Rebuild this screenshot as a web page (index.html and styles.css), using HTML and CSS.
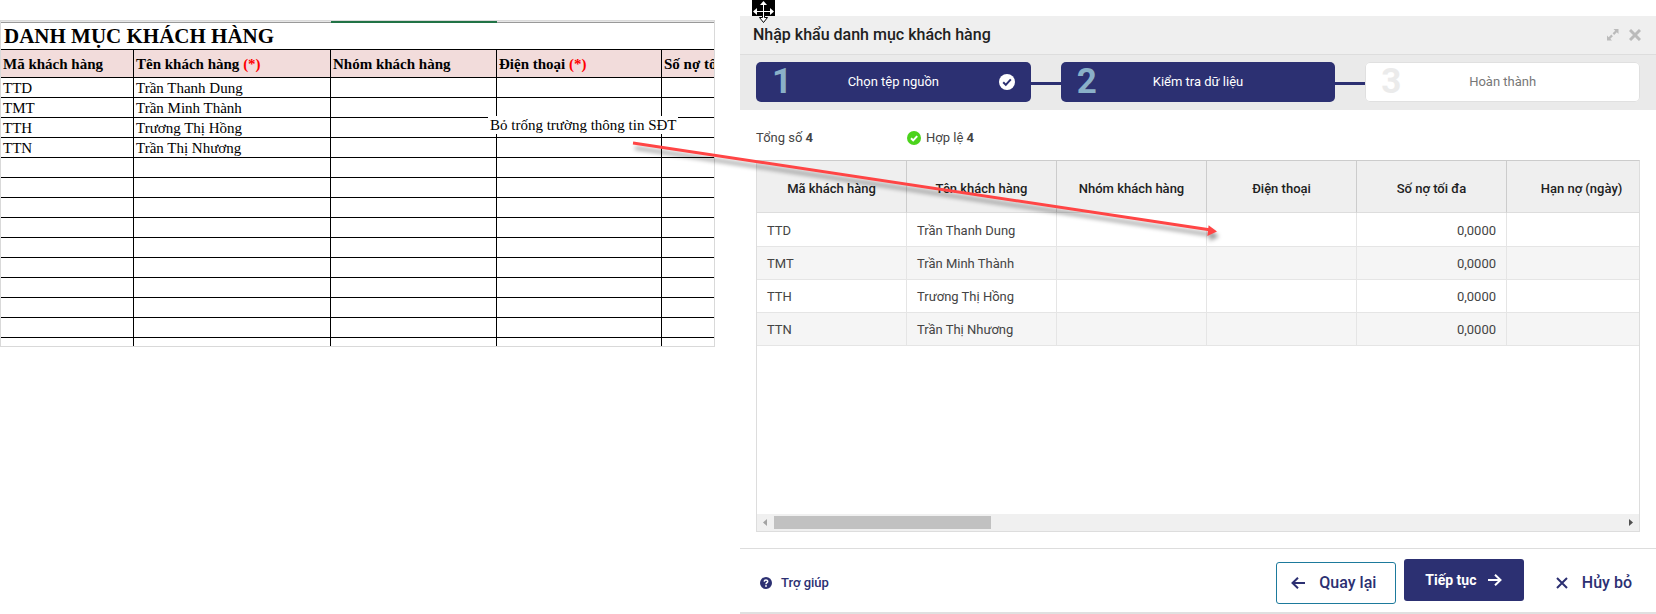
FILE: index.html
```html
<!DOCTYPE html>
<html lang="vi">
<head>
    <meta charset="UTF-8">
    <meta name="viewport" content="width=device-width, initial-scale=1.0">
    <title>Nhập khẩu danh mục khách hàng</title>
    <link rel="stylesheet" href="styles.css">
</head>
<body>
    <section class="sheet">
        <div class="sheet-top"><span></span><span></span><span class="selected"></span><span></span><span></span></div>
        <h2>DANH MỤC KHÁCH HÀNG</h2>
        <table class="sheet-table">
            <colgroup>
                <col class="col-code"><col class="col-name"><col class="col-group"><col class="col-phone"><col>
            </colgroup>
            <thead>
                <tr>
                    <th>Mã khách hàng</th>
                    <th>Tên khách hàng <em>(*)</em></th>
                    <th>Nhóm khách hàng</th>
                    <th>Điện thoại <em>(*)</em></th>
                    <th>Số nợ tối đa</th>
                </tr>
            </thead>
            <tbody>
                <tr><td>TTD</td><td>Trần Thanh Dung</td><td></td><td></td><td></td></tr>
                <tr><td>TMT</td><td>Trần Minh Thành</td><td></td><td></td><td></td></tr>
                <tr><td>TTH</td><td>Trương Thị Hồng</td><td></td><td></td><td></td></tr>
                <tr><td>TTN</td><td>Trần Thị Nhương</td><td></td><td></td><td></td></tr>
                <tr><td></td><td></td><td></td><td></td><td></td></tr>
                <tr><td></td><td></td><td></td><td></td><td></td></tr>
                <tr><td></td><td></td><td></td><td></td><td></td></tr>
                <tr><td></td><td></td><td></td><td></td><td></td></tr>
                <tr><td></td><td></td><td></td><td></td><td></td></tr>
                <tr><td></td><td></td><td></td><td></td><td></td></tr>
                <tr><td></td><td></td><td></td><td></td><td></td></tr>
                <tr><td></td><td></td><td></td><td></td><td></td></tr>
                <tr><td></td><td></td><td></td><td></td><td></td></tr>
                <tr class="cut"><td></td><td></td><td></td><td></td><td></td></tr>
            </tbody>
        </table>
    </section>

    <main class="dialog">
        <header>
            <h1>Nhập khẩu danh mục khách hàng</h1>
            <button class="icon-button" aria-label="Phóng to">
                <svg width="12" height="12" viewBox="0 0 12 12" fill="#bbb">
                    <path d="M6.500 0H11.500V5L9.800 3.300 7.200 5.900 5.600 4.300 8.200 1.700z"></path>
                    <path d="M0 6.500L1.700 8.200 4.300 5.600 5.900 7.200 3.300 9.800 5 11.500H0z"></path>
                </svg>
            </button>
            <button class="icon-button" aria-label="Đóng">
                <svg width="12" height="12" viewBox="0 0 12 12" stroke="#bbb" stroke-width="3">
                    <path d="M1 1l10 10M11 1L1 11"></path>
                </svg>
            </button>
        </header>

        <div class="steps">
            <div class="step">
                <b>1</b>
                <span>Chọn tệp nguồn</span>
                <svg width="16" height="16" viewBox="0 0 16 16">
                    <circle cx="8" cy="8" r="8" fill="#fff"></circle>
                    <path d="M4.200 8.300l2.600 2.600 5-5.600" fill="none" stroke="#2c3072" stroke-width="2"></path>
                </svg>
            </div>
            <div class="step">
                <b>2</b>
                <span>Kiểm tra dữ liệu</span>
            </div>
            <div class="step step-next">
                <b>3</b>
                <span>Hoàn thành</span>
            </div>
        </div>

        <div class="content">
            <div class="totals">
                <p><span>Tổng số <b>4</b></span></p>
                <p>
                    <svg width="14" height="14" viewBox="0 0 14 14">
                        <circle cx="7" cy="7" r="7" fill="#4bd31c"></circle>
                        <path d="M4 7.200l2.200 2.200 4-4.300" fill="none" stroke="#fff" stroke-width="2"></path>
                    </svg>
                    <span>Hợp lệ <b>4</b></span>
                </p>
            </div>

            <div class="grid">
                <div class="grid-view">
                    <table class="grid-table">
                        <thead>
                            <tr>
                                <th>Mã khách hàng</th>
                                <th>Tên khách hàng</th>
                                <th>Nhóm khách hàng</th>
                                <th>Điện thoại</th>
                                <th>Số nợ tối đa</th>
                                <th>Hạn nợ (ngày)</th>
                            </tr>
                        </thead>
                        <tbody>
                            <tr><td>TTD</td><td>Trần Thanh Dung</td><td></td><td></td><td class="number">0,0000</td><td></td></tr>
                            <tr><td>TMT</td><td>Trần Minh Thành</td><td></td><td></td><td class="number">0,0000</td><td></td></tr>
                            <tr><td>TTH</td><td>Trương Thị Hồng</td><td></td><td></td><td class="number">0,0000</td><td></td></tr>
                            <tr><td>TTN</td><td>Trần Thị Nhương</td><td></td><td></td><td class="number">0,0000</td><td></td></tr>
                        </tbody>
                    </table>
                </div>
                <div class="scrollbar">
                    <svg width="17" height="17" viewBox="0 0 17 17"><path d="M10 5v7L6 8.500z" fill="#a3a3a3"></path></svg>
                    <div class="track"><div class="thumb"></div></div>
                    <svg width="17" height="17" viewBox="0 0 17 17"><path d="M7 5v7l4-3.500z" fill="#505050"></path></svg>
                </div>
            </div>
        </div>

        <footer>
            <a class="help" href="#">
                <svg width="12" height="12" viewBox="0 0 12 12">
                    <circle cx="6" cy="6" r="6" fill="#2c3072"></circle>
                    <path d="M4.200 4.600C4.300 2.600 7.700 2.600 7.700 4.500 7.700 5.700 6 5.700 6 7.200" fill="none" stroke="#fff" stroke-width="1.500"></path>
                    <circle cx="6" cy="9" r="0.900" fill="#fff"></circle>
                </svg>
                Trợ giúp
            </a>
            <button class="btn btn-back">
                <svg width="14" height="12" viewBox="0 0 14 12"><path d="M14 6H1.500M7 0.700L1.500 6 7 11.300"></path></svg>
                Quay lại
            </button>
            <button class="btn btn-primary">
                Tiếp tục
                <svg width="14" height="12" viewBox="0 0 14 12"><path d="M0 6h12.500M7 0.700L12.500 6 7 11.300"></path></svg>
            </button>
            <button class="btn btn-cancel">
                <svg width="12" height="12" viewBox="0 0 12 12"><path d="M1 1l10 10M11 1L1 11"></path></svg>
                Hủy bỏ
            </button>
        </footer>
    </main>

    <!-- Note and arrow over both panels -->
    <p class="note">Bỏ trống trường thông tin SĐT</p>
    <svg class="arrow" width="600" height="110" viewBox="0 0 600 110">
        <path d="M3 3l578 87" stroke="#ff4545" stroke-width="3"></path>
        <path d="M578.600 85.200L587 91.500l-9.600 4.500z" fill="#ff4545" stroke="none"></path>
    </svg>
    <svg class="move-cursor" width="23" height="23" viewBox="0 0 23 23">
        <path d="M0 0h23v16H0z"></path>
        <path d="M7.500 17.500h3v-2h2v2h3l-4 5z" fill="#fff" stroke="#000"></path>
        <path d="M11.500 1l3.500 4h-3v6h6V8l4 3.500-4 3.500v-3h-6v6h-1v-6H5v3l-4-3.500L5 8v3h6V5H8z" fill="#fff"></path>
    </svg>
</body>
</html>
```
FILE: styles.css
```css
* {
    margin: 0;
    padding: 0;
    box-sizing: border-box;
}
body {
    display: grid;
    grid-template-columns: minmax(0, 715fr) minmax(0, 916fr);
    gap: 25px;
    align-items: start;
    min-height: 100vh;
    position: relative;
    background: #fff;
    color: #444;
    font-family: Roboto, "Noto Sans", sans-serif;
    font-size: 13px;
    line-height: 16px;
}
button {
    font: inherit;
    border: none;
    background: none;
    cursor: pointer;
}

/* Spreadsheet */
.sheet {
    margin-top: 20px;
    border: 1px solid #d9d9d9;
    overflow: hidden;
    color: #000;
    font-family: "Liberation Serif", "Times New Roman", serif;
    font-size: 15px;
}
.sheet-top {
    display: grid;
    grid-template-columns: 133px 197px 166px 165px 1fr;
    height: 2px;
    background: #e6e6e6;
}
.sheet-top span {
    border-bottom: 1px solid #999;
}
.sheet-top .selected {
    background: #217346;
    border-color: #217346;
}
.sheet h2 {
    height: 27px;
    padding-left: 3px;
    border-bottom: 1px solid #000;
    font-size: 21px;
    line-height: 26px;
}
.sheet-table {
    width: 100%;
    table-layout: fixed;
    border-spacing: 0;
}
.col-code {
    width: 133px;
}
.col-name {
    width: 197px;
}
.col-group {
    width: 166px;
}
.col-phone {
    width: 165px;
}
.sheet-table th,
.sheet-table td {
    height: 20px;
    padding-left: 2px;
    border-right: 1px solid #000;
    border-bottom: 1px solid #000;
    overflow: hidden;
    text-align: left;
    white-space: nowrap;
}
.sheet-table th {
    height: 28px;
    background: #f2dcdb;
}
.sheet-table th em {
    color: #f00;
    font-style: normal;
}
.sheet-table th:last-child,
.sheet-table td:last-child {
    border-right: none;
}
.sheet-table .cut td {
    height: 8px;
    border-bottom: none;
}

/* Import dialog */
.dialog {
    display: flex;
    flex-direction: column;
    min-height: calc(100vh - 16px);
    margin-top: 16px;
    border-bottom: 2px solid #e0e0e0;
}
.dialog header {
    display: flex;
    align-items: center;
    gap: 10px;
    height: 39px;
    padding: 0 15px 0 13px;
    background: #efefef;
    border-bottom: 1px solid #ddd;
}
.dialog h1 {
    flex: 1;
    color: #212121;
    font-size: 16px;
    font-weight: 500;
}
.icon-button svg {
    display: block;
}

/* Steps */
.steps {
    display: grid;
    grid-template-columns: repeat(3, 1fr);
    gap: 30px;
    padding: 7px 16px 8px;
    background: #eaeaea;
}
.step {
    display: grid;
    grid-template-columns: 1fr auto 1fr;
    align-items: center;
    height: 40px;
    padding: 0 16px;
    position: relative;
    border-radius: 5px;
    background: #2c3072;
    color: #fff;
}
.step b {
    color: #8ab0c8;
    font-size: 35px;
    line-height: 40px;
}
.step svg {
    justify-self: end;
}
.step + .step::before {
    content: '';
    position: absolute;
    top: 20px;
    right: 100%;
    width: 30px;
    height: 3px;
    background: #2c3072;
}
.step-next {
    background: #fff;
    color: #777;
    box-shadow: inset 0 0 0 1px #e0e0e0;
}
.step-next b {
    color: #ebebeb;
}

/* Result list */
.content {
    flex: 1;
    display: flex;
    flex-direction: column;
    padding: 18px 16px 16px;
}
.totals {
    display: flex;
    height: 32px;
}
.totals p {
    display: flex;
    align-items: center;
    gap: 5px;
    width: 151px;
    height: 20px;
}
.totals b {
    font-weight: 700;
}
.grid {
    flex: 1;
    display: flex;
    flex-direction: column;
    border: 1px solid #ddd;
    border-top-color: #ccc;
}
.grid-view {
    flex: 1;
    overflow: hidden;
}
.grid-table {
    width: 102%;
    min-width: 900px;
    table-layout: fixed;
    border-spacing: 0;
}
.grid-table th {
    height: 52px;
    padding-top: 4px;
    background: #efefef;
    border-right: 1px solid #ccc;
    border-bottom: 1px solid #ddd;
    color: #212121;
    font-weight: 500;
}
.grid-table td {
    height: 33px;
    padding: 2px 10px 0;
    border-right: 1px solid #e5e5e5;
    border-bottom: 1px solid #e5e5e5;
}
.grid-table tbody tr:first-child td {
    height: 34px;
}
.grid-table tbody tr:nth-child(even) {
    background: #f5f5f5;
}
.grid-table .number {
    text-align: right;
}
.scrollbar {
    display: flex;
    height: 17px;
    background: #f0f0f0;
}
.track {
    flex: 1;
    padding: 2px 0;
}
.thumb {
    width: 217px;
    height: 13px;
    background: #c1c1c1;
}

/* Footer */
.dialog footer {
    display: flex;
    align-items: center;
    gap: 8px;
    height: 64px;
    padding: 4px 16px 0 20px;
    border-top: 1px solid #ddd;
}
.help {
    display: flex;
    align-items: center;
    gap: 9px;
    margin-right: auto;
    color: #2c3072;
    font-weight: 500;
    text-decoration: none;
}
.btn {
    display: flex;
    align-items: center;
    justify-content: center;
    gap: 14px;
    width: 120px;
    height: 42px;
    border-radius: 3px;
    color: #2c3072;
    font-size: 16px;
    font-weight: 500;
}
.btn svg {
    fill: none;
    stroke: currentColor;
    stroke-width: 2;
}
.btn-back {
    padding-right: 4px;
    border: 1px solid #1d7a9c;
}
.btn-primary {
    gap: 12px;
    margin-bottom: 6px;
    background: #2c3072;
    color: #fff;
    font-size: 14px;
    font-weight: 700;
}
.btn-cancel {
    width: auto;
    padding: 0 8px 0 24px;
}

/* Note and arrow */
.note {
    position: absolute;
    top: 116px;
    left: 488px;
    padding: 0 2px;
    background: #fff;
    color: #000;
    font-family: "Liberation Serif", "Times New Roman", serif;
    font-size: 15px;
    line-height: 18px;
}
.arrow {
    position: absolute;
    top: 140px;
    left: 630px;
    filter: drop-shadow(2px 5px 2px rgba(0, 0, 0, 0.4));
    pointer-events: none;
}
.move-cursor {
    position: absolute;
    top: 0;
    left: 752px;
}
```
